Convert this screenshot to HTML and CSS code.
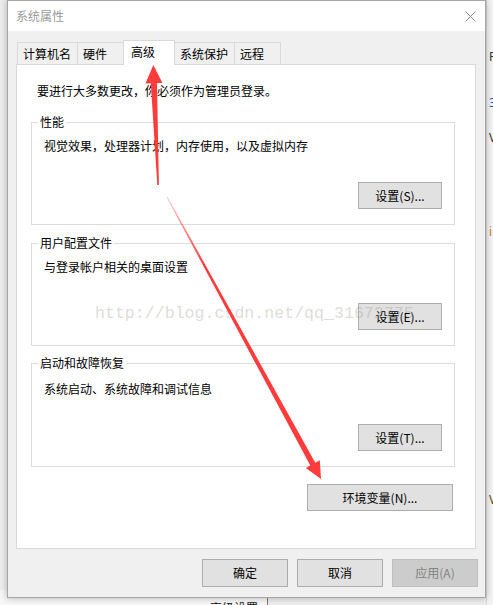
FILE: index.html
```html
<!DOCTYPE html>
<html lang="zh-CN">
<head>
<meta charset="utf-8">
<title>系统属性</title>
<link rel="stylesheet" href="styles.css">
</head>
<body>
<div class="desktop">
  <div class="bgwin bgwin--bottom"><span class="bgwin-text">高级设置</span></div>
  <div class="bgwin bgwin--right">
    <span class="peek peek--tab">F</span>
    <span class="peek peek--blue">3</span>
    <span class="peek peek--dark">V</span>
    <span class="peek peek--orange">i</span>
    <span class="peek peek--dark2">V</span>
  </div>
  <div class="window">
    <div class="titlebar">
      <span class="title">系统属性</span>
      <svg class="close" width="11" height="11" viewBox="0 0 11 11"><path d="M0.5 0.5 L10.5 10.5 M10.5 0.5 L0.5 10.5" stroke="#8a8a8a" stroke-width="1" fill="none"/></svg>
    </div>
    <div class="client">
      <div class="tabs">
        <div class="tab">计算机名</div>
        <div class="tab">硬件</div>
        <div class="tab tab--active">高级</div>
        <div class="tab">系统保护</div>
        <div class="tab">远程</div>
      </div>
      <div class="panel">
        <p class="intro">要进行大多数更改，你必须作为管理员登录。</p>
        <fieldset class="group">
          <legend>性能</legend>
          <p class="group-text">视觉效果，处理器计划，内存使用，以及虚拟内存</p>
          <button class="btn btn--small">设置(S)...</button>
        </fieldset>
        <fieldset class="group">
          <legend>用户配置文件</legend>
          <p class="group-text">与登录帐户相关的桌面设置</p>
          <button class="btn btn--small">设置(E)...</button>
        </fieldset>
        <fieldset class="group group--last">
          <legend>启动和故障恢复</legend>
          <p class="group-text group-text--low">系统启动、系统故障和调试信息</p>
          <button class="btn btn--small">设置(T)...</button>
        </fieldset>
        <button class="btn btn--env">环境变量(N)...</button>
      </div>
      <div class="actions">
        <button class="btn btn--dlg">确定</button>
        <button class="btn btn--dlg">取消</button>
        <button class="btn btn--dlg" disabled>应用(A)</button>
      </div>
    </div>
  </div>
  <div class="watermark">http://blog.csdn.net/qq_31672775</div>
  <svg class="arrows" width="493" height="605" viewBox="0 0 493 605">
    <defs>
      <linearGradient id="fade" gradientUnits="userSpaceOnUse" x1="167" y1="197" x2="205" y2="266">
        <stop offset="0" stop-color="#ff3b3b" stop-opacity="0.25"/>
        <stop offset="1" stop-color="#ff3b3b" stop-opacity="1"/>
      </linearGradient>
    </defs>
    <polygon fill="#ff3b3b" points="153.3,65 162.5,83 157,83 158.9,185 157.3,185 150.8,83.3 145.5,83.6"/>
    <polygon fill="url(#fade)" points="321,479 305.8,467.9 310.3,465.4 166.5,197.3 167.5,196.7 315.3,462.8 319.8,460.3"/>
  </svg>
</div>
</body>
</html>
```

FILE: styles.css
```css
html, body {
  margin: 0;
  padding: 0;
}

body {
  background: #f0f0f0;
  font-family: "Noto Sans CJK SC", "Noto Sans", sans-serif;
  font-size: 12px;
  color: #000;
}

.desktop {
  position: relative;
  width: 493px;
  height: 605px;
  overflow: hidden;
  padding-left: 7px;
  box-sizing: border-box;
  background: #eeeeee;
}

/* background windows peeking around the dialog */
.bgwin {
  position: absolute;
  background: #fff;
  overflow: hidden;
}

.bgwin--bottom {
  left: 0;
  top: 590px;
  width: 267px;
  height: 20px;
  border-right: 1px solid #7a7a7a;
  background: #f7f7f7;
}

.bgwin-text {
  position: absolute;
  left: 210px;
  top: 10px;
  font-size: 12px;
  line-height: 16px;
  color: #111;
  white-space: nowrap;
}

.bgwin--right {
  left: 486px;
  top: 0;
  width: 20px;
  height: 605px;
  background: #f3f3f3;
  border-left: 1px solid #d6d6d6;
}

.peek {
  position: absolute;
  left: 2px;
  font-family: "Noto Sans", sans-serif;
  font-size: 12px;
  line-height: 14px;
}

.peek--tab {
  top: 50px;
  color: #333;
}

.peek--blue {
  top: 96px;
  color: #2a55c8;
}

.peek--dark {
  top: 131px;
  color: #3a3020;
}

.peek--orange {
  top: 225px;
  color: #d08020;
}

.peek--dark2 {
  top: 493px;
  color: #5a4a10;
}

.window {
  position: relative;
  z-index: 1;
  width: 479px;
  height: 598px;
  box-sizing: border-box;
  border: 1px solid #a6a6a6;
  background: #f0f0f0;
  box-shadow: 0 0 7px rgba(0, 0, 0, 0.28);
  display: flex;
  flex-direction: column;
}

.titlebar {
  height: 30px;
  flex: none;
  background: #fff;
  display: flex;
  align-items: center;
  justify-content: space-between;
  padding: 0 9px 0 8px;
}

.title {
  color: #9a9a9a;
  font-size: 12px;
  line-height: 16px;
}

.close {
  display: block;
}

.client {
  flex: 1;
  padding: 9px 0 10px 8px;
  display: flex;
  flex-direction: column;
}

.tabs {
  height: 24px;
  display: flex;
  align-items: flex-end;
  margin-left: 1px;
  position: relative;
  z-index: 2;
}

.tab {
  height: 22px;
  box-sizing: border-box;
  min-width: 47px;
  padding: 0 6px 0 5px;
  border: 1px solid #d9d9d9;
  border-bottom: 0;
  margin-right: -1px;
  background: #f0f0f0;
  line-height: 21px;
  white-space: nowrap;
}

.tab--active {
  height: 25px;
  min-width: 52px;
  padding-left: 7px;
  margin-bottom: -1px;
  background: #fff;
  line-height: 22px;
  position: relative;
}

.panel {
  width: 460px;
  height: 485px;
  box-sizing: border-box;
  border: 1px solid #d9d9d9;
  background: #fff;
  padding-top: 18px;
  display: flex;
  flex-direction: column;
  position: relative;
  z-index: 1;
}

.intro {
  margin: 0 0 15px 20px;
  line-height: 16px;
}

.group {
  margin: 0 20px 10px 14px;
  border: 1px solid #dcdcdc;
  padding: 0 12px 15px 6px;
  min-width: 0;
}

.group--last {
  margin-top: -1px;
}

.group legend {
  padding: 0 2px;
  line-height: 16px;
}

.group-text {
  margin: 8px 0 0 6px;
  line-height: 16px;
}

.group-text--low {
  margin-top: 10px;
}

.group-text--low + .btn--small {
  margin-top: 27px;
}

.btn {
  font-family: "Noto Sans CJK SC", "Noto Sans", sans-serif;
  font-size: 12px;
  color: #000;
  background: #e1e1e1;
  border: 1px solid #adadad;
  padding: 0;
  margin: 0;
  box-sizing: border-box;
  line-height: 16px;
}

.btn--small {
  display: block;
  width: 84px;
  height: 27px;
  margin: 28px 0 0 auto;
}

.btn--env {
  align-self: flex-end;
  width: 146px;
  height: 27px;
  margin: 7px 22px 0 0;
}

.actions {
  margin-top: 10px;
  display: flex;
  justify-content: flex-end;
  gap: 9px;
  padding-right: 7px;
}

.btn--dlg {
  width: 86px;
  height: 28px;
}

.btn--dlg:disabled {
  background: #cccccc;
  border-color: #bfbfbf;
  color: #838383;
}

.watermark {
  position: absolute;
  left: 95px;
  top: 304px;
  font-family: "Liberation Mono", monospace;
  font-size: 16.6px;
  line-height: 20px;
  color: rgba(140, 135, 120, 0.3);
  white-space: nowrap;
  z-index: 5;
  pointer-events: none;
}

.arrows {
  position: absolute;
  left: 0;
  top: 0;
  z-index: 6;
  pointer-events: none;
}
```
